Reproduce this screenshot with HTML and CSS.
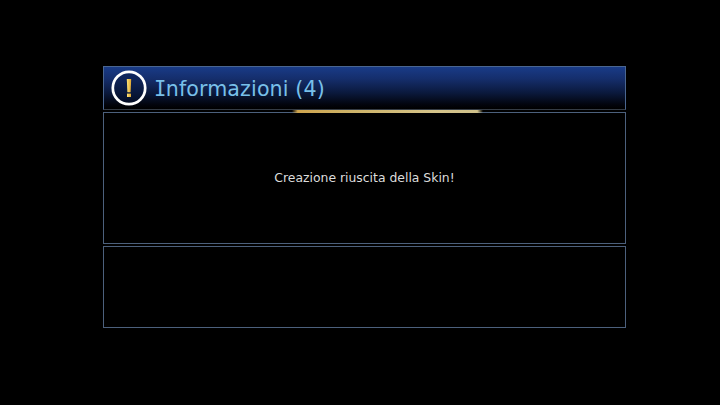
FILE: index.html
```html
<!DOCTYPE html>
<html lang="it">
<head>
<meta charset="utf-8">
<title>Informazioni</title>
<link rel="stylesheet" href="styles.css">
</head>
<body>
<main class="dialog">
  <header class="header">
    <svg class="icon" viewBox="0 0 36 36" aria-hidden="true">
      <defs>
        <linearGradient id="gold" x1="0" x2="1" y1="0" y2="0">
          <stop offset="0" stop-color="#ffe477"/>
          <stop offset="1" stop-color="#dfa52f"/>
        </linearGradient>
      </defs>
      <circle cx="18" cy="18" r="16.2" fill="#08163d" fill-opacity=".4" stroke="#fff" stroke-width="2.7"/>
      <path d="M15.8 9H20.2L19.6 22.2H16.4Z" fill="url(#gold)"/>
      <path d="M16 23.6H20V27H16Z" fill="url(#gold)"/>
    </svg>
    <h1 class="title"><span class="initial">I</span>nformazioni (4)</h1>
    <div class="accent"></div>
  </header>
  <section class="message"><p class="text">Creazione riuscita della Skin!</p></section>
  <section class="actions"></section>
</main>
</body>
</html>
```
FILE: styles.css
```css
* { box-sizing: border-box; }
body {
  margin: 0;
  height: 405px;
  overflow: hidden;
  background: #000;
  font-family: Verdana, "DejaVu Sans", sans-serif;
}
.dialog {
  width: 523px;
  margin: 0 0 0 103px;
  padding-top: 66px;
  display: grid;
  grid-template-rows: 44px 132px 82px;
  row-gap: 2px;
}
.header {
  position: relative;
  display: flex;
  align-items: center;
  padding-left: 7px;
  border: 1px solid #4a6690;
  border-bottom-color: #343b45;
  background: linear-gradient(#193b87 0%, #152e6c 28%, #0b1a3f 60%, #02040c 90%, #000 100%);
}
.icon { width: 36px; height: 36px; flex: none; }
.title {
  margin: 2px 0 0 7px;
  font-size: 20.6px;
  font-weight: 400;
  line-height: 24px;
  letter-spacing: .12px;
  color: #78c0ea;
  white-space: nowrap;
}
.initial {
  font-family: "DejaVu Sans Mono", monospace;
  letter-spacing: -.7px;
}
.accent {
  position: absolute;
  left: 188px;
  top: 43px;
  width: 191px;
  height: 3px;
  background: linear-gradient(90deg, transparent, #cfa54e 3%, #cdb267 30%, #d5c48a 75%, #cfc08a 97%, transparent);
}
.message {
  display: flex;
  justify-content: center;
  align-items: center;
  border: 1px solid #4c607c;
}
.text {
  margin: 0;
  font-size: 12.4px;
  line-height: 16px;
  color: #dcdcdc;
  white-space: nowrap;
}
.actions { border: 1px solid #4c607c; }
```
